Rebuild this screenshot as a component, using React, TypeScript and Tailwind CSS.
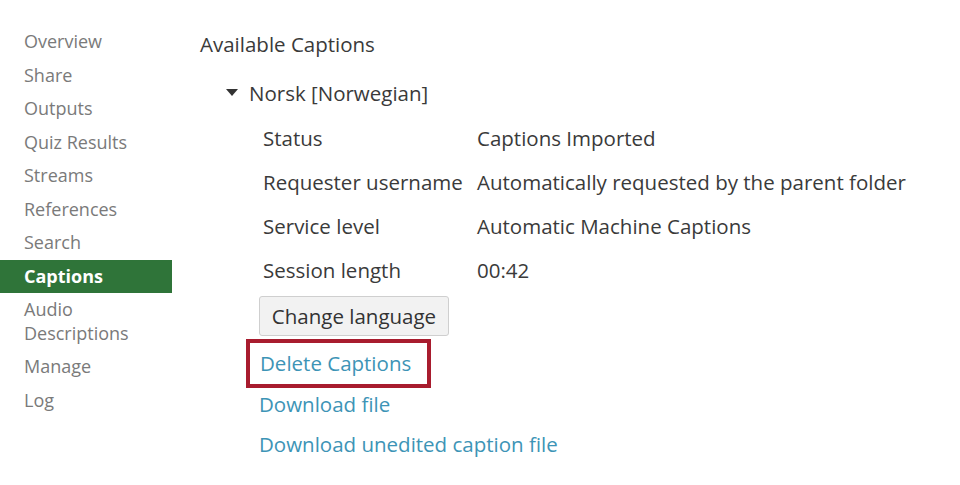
const NAV = [
  'Overview',
  'Share',
  'Outputs',
  'Quiz Results',
  'Streams',
  'References',
  'Search',
  'Captions',
  'Audio Descriptions',
  'Manage',
  'Log',
];

const DETAILS: [string, string][] = [
  ['Status', 'Captions Imported'],
  ['Requester username', 'Automatically requested by the parent folder'],
  ['Service level', 'Automatic Machine Captions'],
  ['Session length', '00:42'],
];

export default function App() {
  return (
    <div className="flex h-[485px] w-[960px] bg-white font-['Open_Sans',sans-serif] text-[#3a3a3a]">
      <nav className="flex w-[172px] shrink-0 flex-col pt-[25px] text-[18px]">
        {NAV.map((item) =>
          item === 'Captions' ? (
            <div key={item} className="flex h-[33.5px] items-center bg-[#2f7439] pl-6 font-bold text-white">
              {item}
            </div>
          ) : item === 'Audio Descriptions' ? (
            <div key={item} className="pt-[4px] pb-[5px] pl-6 leading-[24px] text-[#7a7a7a]">
              Audio
              <br />
              Descriptions
            </div>
          ) : (
            <div key={item} className="flex h-[33.5px] items-center pl-6 text-[#7a7a7a]">
              {item}
            </div>
          )
        )}
      </nav>

      <main className="ml-[28px] flex flex-col pt-[30px] text-[20.5px]">
        <h2 className="h-[28px] leading-[28px]">Available Captions</h2>

        <div className="mt-[21px] flex h-[28px] items-center pl-[26px]">
          <svg width="12" height="8" viewBox="0 0 12 8" className="mr-[11px]">
            <polygon points="0,0 12,0 6,7" fill="#333" />
          </svg>
          <span>Norsk [Norwegian]</span>
        </div>

        <div className="mt-[9px] flex flex-col pl-[63px]">
          {DETAILS.map(([label, value]) => (
            <div key={label} className="flex h-[44px] items-center">
              <span className="w-[214px] shrink-0">{label}</span>
              <span>{value}</span>
            </div>
          ))}
        </div>

        <div className="flex flex-col pl-[59px]">
          <button className="mt-[4px] h-[40px] w-[190px] rounded-[3px] border border-[#cfcfcf] bg-[#f2f2f2] text-[#333]">
            Change language
          </button>

          <div className="-ml-[13px] mt-[3px] flex h-[49px] w-[185px] items-center border-4 border-[#a81c2e] pl-[10px] text-[#3d94b6]">
            Delete Captions
          </div>

          <a className="-mt-[3px] flex h-[38px] items-center text-[#3d94b6]">Download file</a>
          <a className="mt-[2px] flex h-[38px] items-center text-[#3d94b6]">Download unedited caption file</a>
        </div>
      </main>
    </div>
  );
}
